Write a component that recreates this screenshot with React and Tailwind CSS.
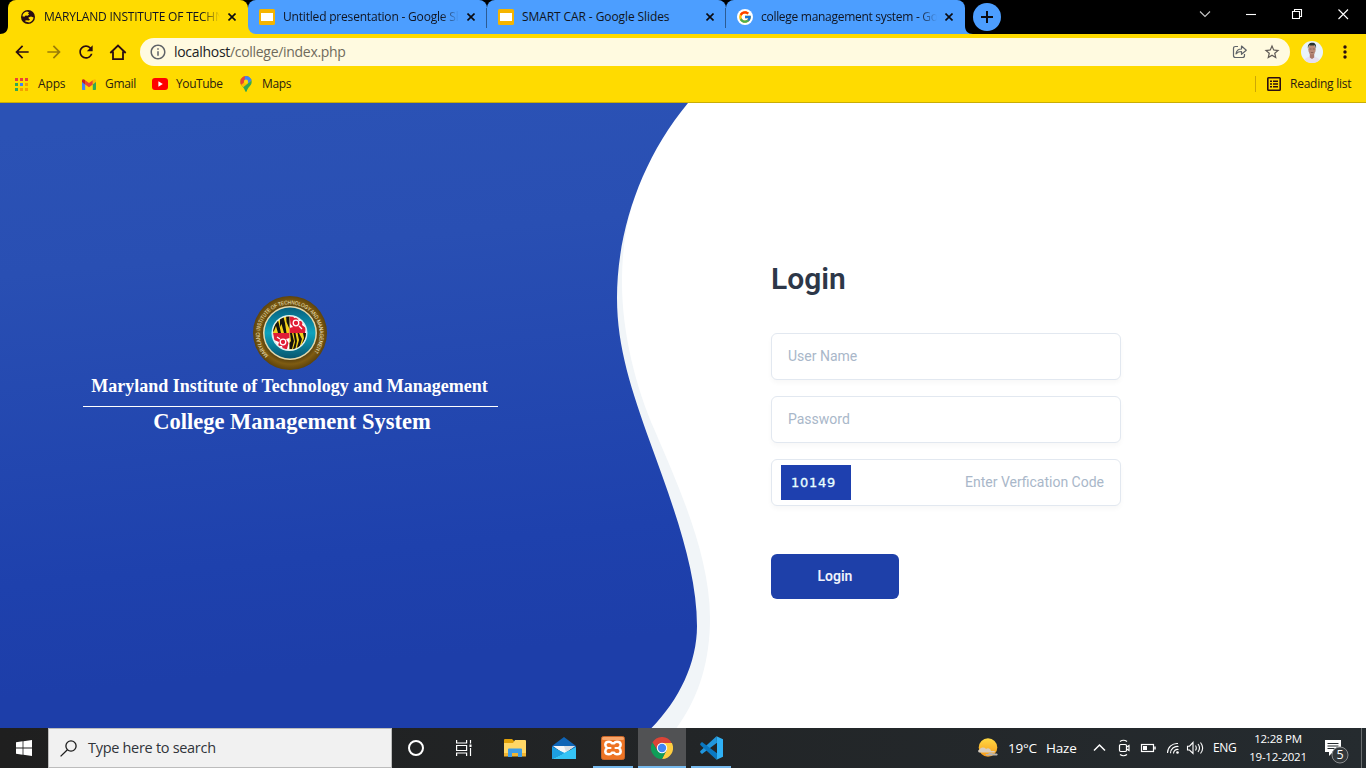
import React from "react";
import { MdArrowBack, MdArrowForward, MdRefresh, MdInfoOutline, MdStarBorder } from "react-icons/md";
import { FcGoogle } from "react-icons/fc";

const ink = "#2a0d12";

function GlobeIcon() {
  return (
    <svg viewBox="0 0 16 16" className="size-4">
      <circle cx="8" cy="8" r="7" fill={ink} />
      <path d="M2.400 7.200C2.800 4.600 4.600 2.900 7 2.600L9 3.200 8 4.400 9.200 5.600 7.600 6.800 5.600 6.600 4.400 7.800ZM8.400 8.400 11 7.600 13.600 8.600C13.200 11.200 11.600 13 9.200 13.500L5.200 12.600 5.600 11.200 9 11.400 10 10.400 8.800 9.800Z" fill="#ffdb00" />
    </svg>
  );
}

function SlidesIcon() {
  return (
    <svg viewBox="0 0 16 16" className="size-4">
      <rect width="16" height="16" rx="1.6" fill="#f5b400" />
      <rect x="2" y="4" width="12" height="8" fill="#fff" />
    </svg>
  );
}

function GoogleIcon() {
  return (
    <span className="flex size-4 items-center justify-center rounded-full bg-white">
      <FcGoogle className="size-3.5" />
    </span>
  );
}

function CloseIcon() {
  return (
    <svg viewBox="0 0 8 8" className="size-2">
      <path d="M.5.5l7 7M7.5.5l-7 7" stroke="#0b0b10" strokeWidth="1.6" />
    </svg>
  );
}

function Tab({ icon, title, tracking, tone, shape, fade }) {
  return (
    <div className={`flex h-[34px] shrink-0 items-center ${tone} ${shape}`}>
      {icon}
      <span
        className={`ml-2 w-[176px] overflow-hidden whitespace-nowrap text-[12px] leading-4 text-[#101420] ${tracking} ${
          fade ? "[mask-image:linear-gradient(to_right,#000_158px,transparent_176px)]" : ""
        }`}
      >
        {title}
      </span>
      <span className="ml-2">
        <CloseIcon />
      </span>
    </div>
  );
}

function TabDivider() {
  return (
    <div className="relative w-0">
      <div className="absolute -left-px top-[8px] h-5 w-px bg-[#2c5c94]" />
    </div>
  );
}

const blueTab = "bg-[#4c9eff] pl-[11px]";

function TabStrip() {
  return (
    <div className="flex h-[34px] bg-black">
      <svg viewBox="0 0 8 34" className="h-[34px] w-2">
        <path d="M8 26V34H0C5 34 8 31 8 26Z" fill="#ffdb00" />
      </svg>
      <Tab
        fade
        icon={<GlobeIcon />}
        title="MARYLAND INSTITUTE OF TECHNOLOGY"
        tracking="tracking-[-0.2px]"
        tone="bg-[#ffdb00] pl-3"
        shape="w-[240px] rounded-t-lg"
      />
      <div className="bg-[linear-gradient(to_bottom,#000_50%,#ffdb00_50%)]">
        <Tab
          fade
          icon={<SlidesIcon />}
          title="Untitled presentation - Google Slides"
          tracking="tracking-[-0.19px]"
          tone={blueTab}
          shape="w-[239px] rounded-l-lg rounded-tr-lg"
        />
      </div>
      <TabDivider />
      <Tab
        icon={<SlidesIcon />}
        title="SMART CAR - Google Slides"
        tracking="tracking-[-0.09px]"
        tone={blueTab}
        shape="w-[239px] rounded-t-lg"
      />
      <TabDivider />
      <Tab
        fade
        icon={<GoogleIcon />}
        title="college management system - Google Search"
        tracking="tracking-[-0.29px]"
        tone={blueTab}
        shape="w-[239px] rounded-t-lg"
      />
      <svg viewBox="0 0 8 34" className="h-[34px] w-2">
        <path d="M0 26V34H8C3 34 0 31 0 26Z" fill="#4c9eff" />
      </svg>
      <div className="mt-[3px] flex size-7 items-center justify-center rounded-full bg-[#4c9eff]">
        <svg viewBox="0 0 12 12" className="size-3">
          <path d="M6 0v12M0 6h12" stroke="#0b0b10" strokeWidth="2" />
        </svg>
      </div>
      <div className="ml-auto flex pr-[17px] pt-[8px]">
        <svg viewBox="0 0 150 12" className="h-3 w-[150px]" fill="none" stroke="#fff" strokeWidth="1.1">
          <path d="M1 3.500l5 5 5-5" stroke="#c8c8c8" />
          <path d="M47 6.500h10" />
          <path d="M93.500 3.500h7v7h-7zM95.500 3.500v-2h7v7h-2" />
          <path d="M139.500 1.500l9.500 9.500M149 1.500l-9.500 9.500" />
        </svg>
      </div>
    </div>
  );
}

function Avatar() {
  return (
    <svg viewBox="0 0 22 22" className="size-[22px]">
      <defs>
        <clipPath id="avatar">
          <circle cx="11" cy="11" r="11" />
        </clipPath>
      </defs>
      <g clipPath="url(#avatar)">
        <rect width="22" height="22" fill="#e9f3fa" />
        <path d="M2 22C3 17 7 15.500 11 15.500S19 17 20 22Z" fill="#e6dff0" />
        <path d="M8.800 12h4.400v4.500L11 18l-2.200-1.500Z" fill="#a9786a" />
        <ellipse cx="11" cy="8.600" rx="3.700" ry="5" fill="#b98a78" />
        <path d="M6.900 7.500C6.500 3.500 8.500 1.800 11.300 1.800S15.600 3.800 15 7.500L14 4.600 8 4.500Z" fill="#27332f" />
        <path d="M8.500 8h2M11.800 8h2M9.800 11.500h2.600" stroke="#7a5148" strokeWidth=".7" />
      </g>
    </svg>
  );
}

function Toolbar() {
  return (
    <div className="flex h-9 items-center bg-[#ffdb00] pl-[12px]">
      <MdArrowBack className="size-5" color={ink} />
      <MdArrowForward className="ml-3 size-5" color="#9a7c08" />
      <MdRefresh className="ml-3 size-5" color={ink} />
      <svg viewBox="0 0 20 20" className="ml-3 size-5" fill="none" stroke={ink} strokeWidth="1.800">
        <path d="M2.300 11 10 3.500 17.700 11M5 9.500V17.100h10V9.500" />
      </svg>
      <div className="ml-[12px] flex h-7 w-[1150px] items-center rounded-full bg-[#fffae0] pl-[9px] pr-[9px]">
        <MdInfoOutline className="size-[18px]" color="#5f6368" />
        <span className="ml-[7px] text-[14px] leading-5 tracking-[-0.3px] text-[#6f6a5c]">
          <span className="text-[#202124]">localhost</span>/college/index.php
        </span>
        <svg viewBox="0 0 16 16" className="ml-auto size-4" fill="none" stroke="#5f6368" strokeWidth="1.200">
          <path d="M6 2.500H3.500Q1.500 2.500 1.500 4.500V11.500Q1.500 13.500 3.500 13.500H10.500Q12.500 13.500 12.500 11.500V10" />
          <path d="M4 9.800C4.500 6.500 6.500 5 9.500 5V2L14.300 6.200 9.500 10.300V7.500C7 7.500 5.500 8.200 4 9.800Z" strokeLinejoin="round" />
        </svg>
        <MdStarBorder className="ml-[15px] size-[18px]" color="#5f5a55" />
      </div>
      <div className="ml-[11px]">
        <Avatar />
      </div>
      <svg viewBox="0 0 4 14" className="ml-5 h-3.5 w-1" fill={ink}>
        <circle cx="2" cy="2" r="1.700" />
        <circle cx="2" cy="7" r="1.700" />
        <circle cx="2" cy="12" r="1.700" />
      </svg>
    </div>
  );
}

function AppsIcon() {
  const colors = ["#ea4335", "#ea4335", "#ea4335", "#34a853", "#4285f4", "#f5a000", "#34a853", "#f5a000", "#f5a000"];
  return (
    <svg viewBox="0 0 13 13" className="size-[13px]">
      {colors.map((c, i) => (
        <rect key={i} x={(i % 3) * 5} y={Math.floor(i / 3) * 5} width="3" height="3" fill={c} />
      ))}
    </svg>
  );
}

function GmailIcon() {
  return (
    <svg viewBox="0 0 14 11" className="h-[11px] w-[14px]">
      <path d="M0 2v8.200q0 .800.800.800H3.200V4.500Z" fill="#4285f4" />
      <path d="M14 2v8.200q0 .800-.800.800H10.800V4.500Z" fill="#34a853" />
      <path d="M3.200 1.200 7 4 10.800 1.200V5.400L7 8.200 3.200 5.400Z" fill="#ea4335" />
      <path d="M0 1.700C0 0 1.700-.300 3.200 1.200V5.400L0 3Z" fill="#c5221f" />
      <path d="M14 1.700C14 0 12.300-.300 10.800 1.200V5.400L14 3Z" fill="#fbbc04" />
    </svg>
  );
}

function YouTubeIcon() {
  return (
    <svg viewBox="0 0 16 12" className="h-3 w-4">
      <rect width="16" height="12" rx="3" fill="#f00" />
      <path d="M6.400 3.300 10.800 6 6.400 8.700Z" fill="#fff" />
    </svg>
  );
}

function MapsIcon() {
  return (
    <svg viewBox="0 0 12 16" className="h-4 w-3">
      <defs>
        <clipPath id="pin">
          <path d="M6 0A5.700 5.700 0 0 1 11.700 5.700C11.700 10 7.500 11 6.800 15.300Q6 16.400 5.200 15.300C4.500 11 .300 10 .300 5.700A5.700 5.700 0 0 1 6 0Z" />
        </clipPath>
      </defs>
      <g clipPath="url(#pin)">
        <rect width="12" height="16" fill="#34a853" />
        <path d="M0 0H12V4L6 9 1 13 0 9Z" fill="#fbbc04" />
        <path d="M0 0H9L4.500 6 1 9 0 8Z" fill="#ea4335" />
        <path d="M5 0H12V4L8.500 7 4.500 5Z" fill="#4285f4" />
      </g>
      <circle cx="6" cy="5.700" r="2.100" fill="#ffdb00" />
    </svg>
  );
}

function Bookmarks() {
  return (
    <div className="flex h-[33px] items-center border-b border-[#c9ad05] bg-[#ffdb00] pb-[4px] pl-[15px] pr-[14px] text-[12px] leading-4 text-[#2b1c10]">
      <AppsIcon />
      <span className="ml-[10px] w-7 tracking-[-0.15px]">Apps</span>
      <span className="ml-[16px]">
        <GmailIcon />
      </span>
      <span className="ml-[9px] w-[31px] tracking-[-0.3px]">Gmail</span>
      <span className="ml-[16px]">
        <YouTubeIcon />
      </span>
      <span className="ml-2 w-[47px] tracking-[-0.4px]">YouTube</span>
      <span className="ml-[17px]">
        <MapsIcon />
      </span>
      <span className="ml-[10px] tracking-[-0.35px]">Maps</span>
      <div className="ml-auto h-4 w-px bg-[#cda705]" />
      <svg viewBox="0 0 14 14" className="ml-[11px] size-3.5" fill="none" stroke={ink}>
        <rect x=".8" y=".8" width="12.400" height="12.400" rx=".8" strokeWidth="1.600" />
        <path d="M3 4.300h2M6 4.300h5M3 7h2M6 7h5M3 9.700h2M6 9.700h5" strokeWidth="1.400" />
      </svg>
      <span className="ml-[9px] w-[62px] whitespace-nowrap tracking-[-0.25px]">Reading list</span>
    </div>
  );
}

function Seal() {
  return (
    <svg viewBox="0 0 76 76" className="size-[76px]">
      <defs>
        <radialGradient id="rim" cx=".5" cy=".5" r=".5">
          <stop offset=".68" stopColor="#4f3a0c" />
          <stop offset=".84" stopColor="#7f5c12" />
          <stop offset="1" stopColor="#5d430c" />
        </radialGradient>
        <linearGradient id="ring" x1="0" y1="0" x2="0" y2="1">
          <stop offset="0" stopColor="#06607e" />
          <stop offset=".5" stopColor="#0fa3bd" />
          <stop offset="1" stopColor="#07566f" />
        </linearGradient>
        <clipPath id="shield">
          <circle cx="37.500" cy="38" r="16.500" />
        </clipPath>
        <path id="motto" d="M16.500 60.500A30 30 0 1 1 60.500 59" />
      </defs>
      <circle cx="38" cy="38" r="37" fill="url(#rim)" />
      <circle cx="38" cy="38" r="27" fill="#e4d9ad" />
      <circle cx="38" cy="38" r="25.500" fill="url(#ring)" />
      <circle cx="37.500" cy="38" r="18" fill="#dff0ee" />
      <g clipPath="url(#shield)">
        <rect x="20" y="20" width="36" height="36" fill="#fff" />
        <path d="M20 20H37.500V38H20ZM37.500 38H56V56H37.500Z" fill="#f3d11b" />
        <path d="M20 24 25 22 27 29 29 38H26L24 31 22 36 20 38ZM28 20 31 20 33 28 34.500 38H32L29.500 29 28 32ZM34 20H37.500V34L34.500 27ZM40 38 42 46 40 54H37.500V48L39 46 38 38ZM43.500 38 45 46 43 56H40.500L43 47 41.500 38ZM47 38 50 44 47 54H44.500L47 45 45.500 38ZM51 38H56L51 50H49.500L52 43Z" fill="#16130d" />
        <path d="M37.500 20H41L42 23 45 22 47 26 51 26 50 30 54 33 53 38H37.500V33L41 32 38.500 29ZM37.500 38V43L34 44 36.500 48 35 54 31 55 30 51 26 51 27 47 22 45 21 38Z" fill="#e11d35" />
        <circle cx="44" cy="28" r="2.800" fill="none" stroke="#fff" strokeWidth="1.300" />
        <circle cx="31" cy="47" r="2.800" fill="none" stroke="#fff" strokeWidth="1.300" />
        <path d="M47 31l3 3M25 42l3 2" stroke="#fff" strokeWidth="1.300" />
      </g>
      <text fill="#f1e9c9" fontSize="5.600" fontWeight="400" fontFamily="Liberation Sans, sans-serif">
        <textPath href="#motto" textLength="136" lengthAdjust="spacingAndGlyphs">
          MARYLAND INSTITUTE OF TECHNOLOGY AND MANAGEMENT
        </textPath>
      </text>
    </svg>
  );
}

function Wave() {
  return (
    <svg viewBox="0 0 1366 625" className="absolute inset-0 h-[625px] w-[1366px]">
      <defs>
        <linearGradient id="sea" gradientUnits="userSpaceOnUse" x1="320" y1="0" x2="375" y2="560">
          <stop offset="0" stopColor="#2b52b5" />
          <stop offset=".25" stopColor="#294fb3" />
          <stop offset=".8" stopColor="#1e41ad" />
          <stop offset="1" stopColor="#1d3ea9" />
        </linearGradient>
      </defs>
      <path d="M640 80C628 110 622 140 622 180C622 230 636 285 655 328C676 378 710 450 710 515C710 556 700 593 676.500 625H600V80Z" fill="#f1f5f8" />
      <path d="M0 0H688C640 58 617 130 617 195C617 245 632 288 650 339C672 400 697 465 697 523C697 560 679 597 651.500 625H0Z" fill="url(#sea)" />
    </svg>
  );
}

const field =
  "flex h-[47px] w-[350px] items-center rounded-md border border-[#e2e8f0] bg-white px-4 text-[14px] leading-5 text-[#a9b7c9] shadow-[0_3px_5px_rgba(0,0,0,0.03)]";

function LoginPage() {
  return (
    <main className="relative flex h-[625px] bg-white">
      <Wave />
      <section className="relative flex w-[581px] flex-col items-center pt-[192px] font-['Liberation_Serif',serif] font-bold text-white">
        <div className="mr-px">
          <Seal />
        </div>
        <h1 className="mr-[2px] mt-1 whitespace-nowrap text-[18px] leading-[22px]">
          Maryland Institute of Technology and Management
        </h1>
        <div className="mt-[9px] h-px w-[415px] bg-white" />
        <h2 className="ml-[3px] mt-[2px] whitespace-nowrap text-[22.5px] leading-[26px]">College Management System</h2>
      </section>
      <section className="relative ml-[190px] pt-[157px] font-['Roboto',sans-serif]">
        <h2 className="text-[30px] font-semibold leading-[38px] text-[#2d3748]">Login</h2>
        <div className="mt-[35px] flex flex-col gap-4">
          <div className={`${field} pb-px`}>User Name</div>
          <div className={`${field} pb-px`}>Password</div>
          <div className={`${field} justify-between !pl-[9px]`}>
            <div className="flex h-[35px] w-[70px] items-center bg-[#1e40af] pl-[10px] font-['DejaVu_Sans',sans-serif] text-[13px] tracking-[0.73px] text-[#e9ffff] [-webkit-text-stroke:0.3px_#e9ffff]">
              10149
            </div>
            <span className="pb-[2px]">Enter Verfication Code</span>
          </div>
        </div>
        <div className="mt-12 flex h-[45px] w-32 items-center justify-center rounded-md bg-[#1e40a9] pb-px text-[14px] font-semibold leading-5 text-[#eef2fb]">
          Login
        </div>
      </section>
    </main>
  );
}

function TaskView() {
  return (
    <svg viewBox="0 0 16 16" className="h-4 w-4" fill="none" stroke="#fff" strokeWidth="1.200">
      <path d="M.600 0v3h10V0M.600 16v-3h10v3M.600 5.500h10v5h-10zM14.500 0v3.500M14.500 8v8" />
      <rect x="13.500" y="4.500" width="2" height="2.500" fill="#fff" stroke="none" />
    </svg>
  );
}

function ExplorerIcon() {
  return (
    <svg viewBox="0 0 22 18" className="h-[18px] w-[22px]">
      <path d="M0 1Q0 0 1 0H8L10 2V5H0Z" fill="#e0a008" />
      <path d="M0 4H9L11 1H21Q22 1 22 2V17H0Z" fill="#ffd766" />
      <path d="M0 14H22V17.500H0Z" fill="#f2b632" />
      <path d="M4 18V10.500Q4 9.500 5 9.500H17Q18 9.500 18 10.500V18H14V14H8V18Z" fill="#3f9de6" />
    </svg>
  );
}

function MailIcon() {
  return (
    <svg viewBox="0 0 24 22" className="h-[22px] w-6">
      <path d="M0 9 12 0 24 9V12H0Z" fill="#0f64b6" />
      <path d="M1 9H23L12 17Z" fill="#f4f6f8" />
      <path d="M12 9H23L14 15Z" fill="#d9dde2" />
      <path d="M0 10 12 16 0 22Z" fill="#2cb2ee" />
      <path d="M24 10V22H0Z" fill="#35c3f5" />
      <path d="M0 10 12.500 16 0 22Z" fill="#1d9fe2" />
    </svg>
  );
}

function XamppIcon() {
  return (
    <svg viewBox="0 0 24 24" className="size-6">
      <rect x=".5" y=".5" width="23" height="23" rx="2" fill="#ee7424" stroke="#c9662a" />
      <rect x="1" y="1" width="22" height="3" rx="1.500" fill="#f8a66a" />
      <path
        d="M8 5.700Q4.300 5.700 4.300 8.800 4.300 10.800 6.300 12 4.300 13.200 4.300 15.200 4.300 18.300 8 18.300 10 18.300 10.800 16.700H13.200Q14 18.300 16 18.300 19.700 18.300 19.700 15.200 19.700 13.200 17.700 12 19.700 10.800 19.700 8.800 19.700 5.700 16 5.700 14 5.700 13.200 7.300H10.800Q10 5.700 8 5.700Z"
        fill="none"
        stroke="#fff"
        strokeWidth="2.500"
        strokeLinejoin="round"
      />
      <path d="M8.500 9.200v.6M8.500 14.200v.6M15.500 9.200v.6M15.500 14.200v.6" stroke="#ee7424" strokeWidth="1.200" />
      <path d="M6 12h3.500M14.500 12H18" stroke="#fff" strokeWidth="2.200" strokeLinecap="round" />
    </svg>
  );
}

function ChromeIcon() {
  return (
    <svg viewBox="0 0 22 22" className="size-[22px]">
      <path d="M11 11 1.470 5.500A11 11 0 0 1 20.530 5.500Z" fill="#db4437" />
      <path d="M20.900 6A11 11 0 0 1 11 22L15.500 13.500 11 6Z" fill="#ffcd40" />
      <path d="M1.470 5.500 6.600 13.500 11 11 11 5.500Z" fill="#db4437" />
      <path d="M1.470 5.500A11 11 0 0 0 11 22L15.300 13.500 11 16 6.300 13.600Z" fill="#0f9d58" />
      <circle cx="11" cy="11" r="5.200" fill="#fff" />
      <circle cx="11" cy="11" r="4.200" fill="#4285f4" />
    </svg>
  );
}

function CodeIcon() {
  return (
    <svg viewBox="0 0 24 24" className="size-6">
      <path d="M17.500.300 1.600 14.800Q.500 16 1.600 16.800L3 17.900 18 6.700Z" fill="#2196dd" />
      <path d="M17.500 23.700 1.600 9.200Q.500 8 1.600 7.200L3 6.100 18 17.300Z" fill="#0a78c2" />
      <path d="M17.500.300 24 3.200V20.800L17.500 23.700 18 17.300V6.700Z" fill="#2fb0f5" />
    </svg>
  );
}

function TaskItem({ children, open, focused }) {
  return (
    <div className={`relative flex h-10 w-12 items-center justify-center ${focused ? "bg-[#515254]" : ""}`}>
      {children}
      {open && <div className={`absolute bottom-0 h-0.5 bg-[#76b9ed] ${focused ? "inset-x-0" : "inset-x-1"}`} />}
    </div>
  );
}

function WeatherIcon() {
  return (
    <svg viewBox="0 0 22 20" className="h-5 w-[22px]">
      <defs>
        <linearGradient id="sun" x1="0" y1="0" x2="0" y2="1">
          <stop offset="0" stopColor="#ffd943" />
          <stop offset="1" stopColor="#f79a1c" />
        </linearGradient>
      </defs>
      <circle cx="11" cy="9.500" r="9.300" fill="url(#sun)" />
      <path d="M2 14.500a1.600 1.600 0 0 1 .500-3 4 4 0 0 1 6.500-.500 3 3 0 0 1 5 2h3.500a1 1 0 0 1 0 1.500Z" fill="#d8cdbf" />
      <path d="M9 17.500a1 1 0 0 1 0-1.500h2a3 3 0 0 1 5-.500h4a1.200 1.200 0 0 1 0 2Z" fill="#b9b3ac" />
    </svg>
  );
}

function TrayIcons() {
  return (
    <svg viewBox="0 0 112 18" className="h-[18px] w-[112px]" fill="none" stroke="#fff" strokeWidth="1.200">
      <path d="M1 11.500 6.500 6 12 11.500" strokeWidth="1.500" />
      <rect x="26.500" y="5.500" width="7" height="7" rx="1.200" />
      <path d="M33.500 8l2.500-1.500v5L33.500 10M27 2.500Q30.500 0 34 2.500M27 15.500Q30.500 18 34 15.500" />
      <rect x="48.500" y="5.500" width="12" height="7" />
      <path d="M62 7.500v3" strokeWidth="1.500" />
      <rect x="50" y="7" width="4" height="4" fill="#fff" stroke="none" />
      <path d="M74.500 14A9.500 9.500 0 0 1 85 4.500M77.500 14.300A6.800 6.800 0 0 1 85.500 7.500M80.500 14.500A4 4 0 0 1 85.500 10.500" strokeWidth="1.100" />
      <circle cx="84.500" cy="13.500" r="1.300" fill="#fff" stroke="none" />
      <path d="M94.500 7.200h2L100 3.500v11L96.500 11h-2zM102.500 6.500q1.600 2.500 0 5M105 5q3 4 0 8M107.500 3.500q4.300 5.500 0 11" strokeWidth="1.100" />
    </svg>
  );
}

function Taskbar() {
  return (
    <footer className="flex h-10 items-center bg-[linear-gradient(to_right,#1f1f1f,#222527_50%,#252b2f)] text-white">
      <div className="flex w-12 justify-center">
        <svg viewBox="0 0 16 16" className="size-4" fill="#fff">
          <path d="M0 2.200 6.600 1.300V7.600H0ZM7.400 1.200 16 0V7.600H7.400ZM0 8.400H6.600V14.700L0 13.800ZM7.400 8.400H16V16L7.400 14.800Z" />
        </svg>
      </div>
      <div className="flex h-10 w-[344px] items-center border border-[#bcbcbc] bg-[#f1f1f1] pl-[11px]">
        <svg viewBox="0 0 17 17" className="size-[17px]" fill="none" stroke="#1c1c1c" strokeWidth="1.300">
          <circle cx="11" cy="6" r="5.100" />
          <path d="M7.400 9.700.600 16.400" />
        </svg>
        <span className="ml-[11px] text-[14.5px] leading-5 tracking-[-0.3px] text-[#30343a]">Type here to search</span>
      </div>
      <TaskItem>
        <span className="size-4 rounded-full border-2 border-white" />
      </TaskItem>
      <TaskItem>
        <TaskView />
      </TaskItem>
      <div className="ml-[3px] flex gap-px">
        <TaskItem>
          <ExplorerIcon />
        </TaskItem>
        <TaskItem>
          <MailIcon />
        </TaskItem>
        <TaskItem open>
          <XamppIcon />
        </TaskItem>
        <TaskItem open focused>
          <ChromeIcon />
        </TaskItem>
        <TaskItem open>
          <CodeIcon />
        </TaskItem>
      </div>
      <div className="ml-auto flex h-10 items-center">
        <WeatherIcon />
        <span className="ml-[9px] w-[38px] text-[13.5px] leading-5 tracking-[-0.2px]">19°C</span>
        <span className="w-[47px] text-[13.5px] leading-5 tracking-[-0.2px]">Haze</span>
        <TrayIcons />
        <span className="ml-2 w-[35px] text-[12px] leading-5 tracking-[-0.4px]">ENG</span>
        <div className="flex w-[60px] flex-col items-center text-[11.5px] leading-[18px] tracking-[-0.25px]">
          <span>12:28 PM</span>
          <span>19-12-2021</span>
        </div>
        <div className="relative ml-[17px] h-10 w-[41px]">
          <svg viewBox="0 0 41 40" className="h-10 w-[41px]">
            <path d="M0 12H16V24H8L4 28V24H0Z" fill="#fff" />
            <path d="M2.500 15.500h11M2.500 18h11M2.500 20.500h7" stroke="#252b2f" />
            <circle cx="15" cy="27" r="8" fill="#33383b" stroke="#8a8d8f" />
          </svg>
          <span className="absolute left-[10px] top-[18px] w-[10px] text-center text-[12.5px] leading-[18px]">5</span>
          <div className="absolute right-[4px] top-0 h-10 w-px bg-[#6a6e70]" />
        </div>
      </div>
    </footer>
  );
}

export default function App() {
  return (
    <div className="flex h-[768px] w-[1366px] flex-col overflow-hidden font-['Open_Sans',sans-serif]">
      <TabStrip />
      <Toolbar />
      <Bookmarks />
      <LoginPage />
      <Taskbar />
    </div>
  );
}
